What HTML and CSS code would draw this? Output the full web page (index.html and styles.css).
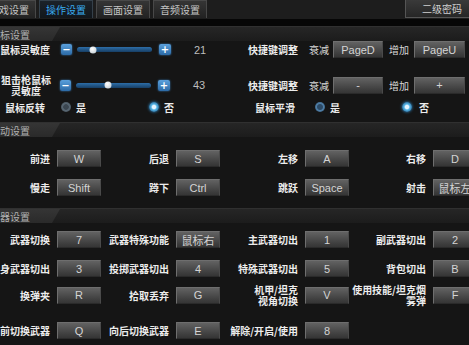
FILE: index.html
```html
<!DOCTYPE html>
<html lang="zh">
<head>
<meta charset="utf-8">
<link rel="stylesheet" href="styles.css">
</head>
<body>
<div class="tabs">
  <div class="tab">游戏设置</div>
  <div class="tab active">操作设置</div>
  <div class="tab">画面设置</div>
  <div class="tab">音频设置</div>
  <div class="pwd">二级密码</div>
</div>

<div class="sec-head"><span>鼠标设置</span></div>
<div class="mouse">
  <div class="mrow r1">
    <div class="mleft">
      <div class="mlabel">鼠标灵敏度</div>
      <span class="sbtn">−</span>
      <span class="track"><span class="knob" style="left:21%"></span></span>
      <span class="sbtn">+</span>
      <span class="val">21</span>
    </div>
    <div class="mright">
      <div class="rlabel">快捷键调整</div>
      <span class="small s1">衰减</span>
      <span class="kbtn wide">PageD</span>
      <span class="small s2">增加</span>
      <span class="kbtn wide w2">PageU</span>
    </div>
  </div>
  <div class="mrow r2">
    <div class="mleft">
      <div class="mlabel two">狙击枪鼠标<br>灵敏度</div>
      <span class="sbtn">−</span>
      <span class="track"><span class="knob" style="left:43%"></span></span>
      <span class="sbtn">+</span>
      <span class="val">43</span>
    </div>
    <div class="mright">
      <div class="rlabel">快捷键调整</div>
      <span class="small s1">衰减</span>
      <span class="kbtn wide">-</span>
      <span class="small s2">增加</span>
      <span class="kbtn wide w2">+</span>
    </div>
  </div>
  <div class="mrow r3">
    <div class="mleft">
      <div class="mlabel rl">鼠标反转</div>
      <span class="radio"></span><span class="opt">是</span>
      <span class="radio on far"></span><span class="opt">否</span>
    </div>
    <div class="mright">
      <div class="rlabel rs">鼠标平滑</div>
      <span class="radio blue"></span><span class="opt">是</span>
      <span class="radio on far2"></span><span class="opt">否</span>
    </div>
  </div>
</div>

<div class="sec-head"><span>移动设置</span></div>
<div class="keys move">
  <div class="krow">
    <div class="klabel">前进</div><div class="kbtn">W</div>
    <div class="klabel">后退</div><div class="kbtn">S</div>
    <div class="klabel">左移</div><div class="kbtn">A</div>
    <div class="klabel">右移</div><div class="kbtn">D</div>
  </div>
  <div class="krow">
    <div class="klabel">慢走</div><div class="kbtn">Shift</div>
    <div class="klabel">蹲下</div><div class="kbtn">Ctrl</div>
    <div class="klabel">跳跃</div><div class="kbtn">Space</div>
    <div class="klabel">射击</div><div class="kbtn">鼠标左</div>
  </div>
</div>

<div class="sec-head"><span>武器设置</span></div>
<div class="keys weapons">
  <div class="krow">
    <div class="klabel">武器切换</div><div class="kbtn">7</div>
    <div class="klabel">武器特殊功能</div><div class="kbtn">鼠标右</div>
    <div class="klabel">主武器切出</div><div class="kbtn">1</div>
    <div class="klabel">副武器切出</div><div class="kbtn">2</div>
  </div>
  <div class="krow">
    <div class="klabel">近身武器切出</div><div class="kbtn">3</div>
    <div class="klabel">投掷武器切出</div><div class="kbtn">4</div>
    <div class="klabel">特殊武器切出</div><div class="kbtn">5</div>
    <div class="klabel">背包切出</div><div class="kbtn">B</div>
  </div>
  <div class="krow tall">
    <div class="klabel">换弹夹</div><div class="kbtn">R</div>
    <div class="klabel">拾取丢弃</div><div class="kbtn">G</div>
    <div class="klabel two">机甲/坦克<br>视角切换</div><div class="kbtn">V</div>
    <div class="klabel two">使用技能/坦克烟<br>雾弹</div><div class="kbtn">F</div>
  </div>
  <div class="krow last">
    <div class="klabel">向前切换武器</div><div class="kbtn">Q</div>
    <div class="klabel">向后切换武器</div><div class="kbtn">E</div>
    <div class="klabel">解除/开启/使用</div><div class="kbtn">8</div>
  </div>
</div>
</body>
</html>
```

FILE: styles.css
```css
html, body {
  margin: 0;
  padding: 0;
}
body {
  width: 469px;
  height: 345px;
  overflow: hidden;
  background: #151515;
  font-family: "Noto Sans CJK SC", "Noto Sans", sans-serif;
  font-size: 10px;
  color: #ececec;
}

/* tabs */
.tabs {
  display: flex;
  gap: 3px;
  height: 19px;
  background: #1d1d1d;
  border-bottom: 7px solid #060606;
  overflow: hidden;
}
.tab {
  flex: 0 0 54px;
  box-sizing: border-box;
  height: 18px;
  display: flex;
  align-items: center;
  justify-content: center;
  background: linear-gradient(#353535, #222);
  border: 1px solid #484848;
  border-bottom: none;
  color: #c4c4c4;
  font-size: 10px;
  white-space: nowrap;
}
.tab:first-child { margin-left: -18px; }
.tab.active {
  background: linear-gradient(#1b2229, #12171c);
  border-color: #34404a;
  color: #38aaef;
}
.pwd {
  flex: 0 0 74px;
  margin-left: auto;
  margin-right: -10px;
  box-sizing: border-box;
  height: 18px;
  display: flex;
  align-items: center;
  justify-content: center;
  background: linear-gradient(#3a3a3a, #262626);
  border: 1px solid #555;
  border-top: none;
  color: #d0d0d0;
}

/* section headers */
.sec-head {
  position: relative;
  height: 14px;
  display: flex;
  align-items: center;
  background: linear-gradient(#262626, #1c1c1c);
  border-top: 1px solid #303030;
  color: #b0b0b0;
  overflow: hidden;
}
.sec-head::before {
  content: "";
  position: absolute;
  left: 0; top: 0; bottom: 0;
  width: 60px;
  background: linear-gradient(#353535, #2a2a2a);
  clip-path: polygon(0 0, 60px 0, 52px 100%, 0 100%);
}
.sec-head span {
  position: relative;
  margin-left: -10px;
  white-space: nowrap;
}

/* mouse section */
.mouse { padding-bottom: 8px; }
.mrow {
  display: flex;
  align-items: center;
}
.mrow.r1 { height: 17px; margin-top: 0; }
.mrow.r2 { height: 22px; margin-top: 16px; }
.mrow.r3 { height: 14px; margin-top: 4px; }
.mleft {
  flex: 0 0 230px;
  display: flex;
  align-items: center;
}
.mright {
  flex: 1;
  display: flex;
  align-items: center;
}
.mlabel {
  flex: 0 0 52px;
  box-sizing: border-box;
  text-align: right;
  padding-right: 3px;
  white-space: nowrap;
  font-weight: bold;
}
.mlabel.two {
  text-align: center;
  padding-right: 0;
  line-height: 11px;
}
.mlabel.rl { padding-right: 7px; }
.sbtn {
  flex: none;
  width: 11px;
  height: 11px;
  margin-left: 8px;
  border-radius: 2px;
  background: linear-gradient(#5aa0dc, #2c6aa6);
  box-shadow: 0 0 2px #3a80c0;
  color: #fff;
  font-family: "DejaVu Sans", sans-serif;
  font-weight: bold;
  font-size: 10px;
  line-height: 11px;
  text-align: center;
}
.sbtn + .track { margin-left: 5px; }
.track + .sbtn { margin-left: 7px; width: 12px; }
.track {
  position: relative;
  flex: none;
  width: 75px;
  height: 5px;
  border-radius: 3px;
  background: linear-gradient(#2d6ea8, #173e64);
}
.knob {
  position: absolute;
  top: 50%;
  width: 7px;
  height: 7px;
  border-radius: 50%;
  background: radial-gradient(circle at 40% 35%, #fff, #b8c4cc);
  transform: translate(-50%, -50%);
}
.val {
  flex: 0 0 22px;
  margin-left: 18px;
  text-align: center;
  color: #bdbdbd;
  font-family: "Liberation Sans", sans-serif;
  font-size: 11px;
}
.rlabel {
  flex: 0 0 70px;
  box-sizing: border-box;
  text-align: right;
  padding-right: 2px;
  white-space: nowrap;
  font-weight: bold;
}
.rlabel.rs { padding-right: 5px; }
.small { flex: none; color: #d8d8d8; }
.small.s1 { margin-left: 9px; margin-right: 4px; }
.small.s2 { margin-left: 6px; margin-right: 5px; }
.kbtn.wide { flex: none; width: 50px; }
.kbtn.wide.w2 { width: 51px; }

.radio {
  flex: none;
  width: 10px;
  height: 10px;
  border-radius: 50%;
  margin-left: 9px;
  margin-right: 5px;
  background: radial-gradient(circle, #3b4650 0 35%, #5b6a76 45%, #3a444d 100%);
}
.radio.blue {
  margin-left: 15px;
  background: radial-gradient(circle, #2c4a66 0 35%, #4f7fa8 50%, #2f4c66 100%);
}
.radio.on {
  background: radial-gradient(circle, #e4f4ff 0 25%, #5ab8e8 40%, #2a6c9c 75%, #1c3c58 100%);
  box-shadow: 0 0 3px #2f8ccc;
}
.radio.far { margin-left: 63px; }
.radio.far2 { margin-left: 62px; margin-right: 7px; }
.opt { flex: none; font-weight: bold; }

/* key grids */
.keys { padding-top: 13px; padding-bottom: 12px; }
.weapons { padding-top: 8px; }
.krow {
  display: grid;
  grid-template-columns: 57px 44px 75px 44px 85px 44px 84px 44px;
  align-items: center;
  height: 17px;
}
.krow + .krow { margin-top: 12px; }
.krow.tall { height: 22px; margin-top: 7px; }
.krow.last { margin-top: 16px; }
.klabel {
  display: flex;
  justify-content: flex-end;
  padding-right: 7px;
  white-space: nowrap;
  font-weight: bold;
  text-align: right;
}
.klabel.two { line-height: 11px; }
.kbtn {
  box-sizing: border-box;
  height: 17px;
  display: flex;
  align-items: center;
  justify-content: center;
  background: linear-gradient(#626262, #3d3d3d 80%, #353535);
  border: 1px solid #6e6e6e;
  border-bottom-color: #2a2a2a;
  border-right-color: #4a4a4a;
  color: #d4d4d4;
  font-family: "Liberation Sans", "Noto Sans CJK SC", sans-serif;
  font-size: 11px;
  white-space: nowrap;
  overflow: hidden;
}
```
